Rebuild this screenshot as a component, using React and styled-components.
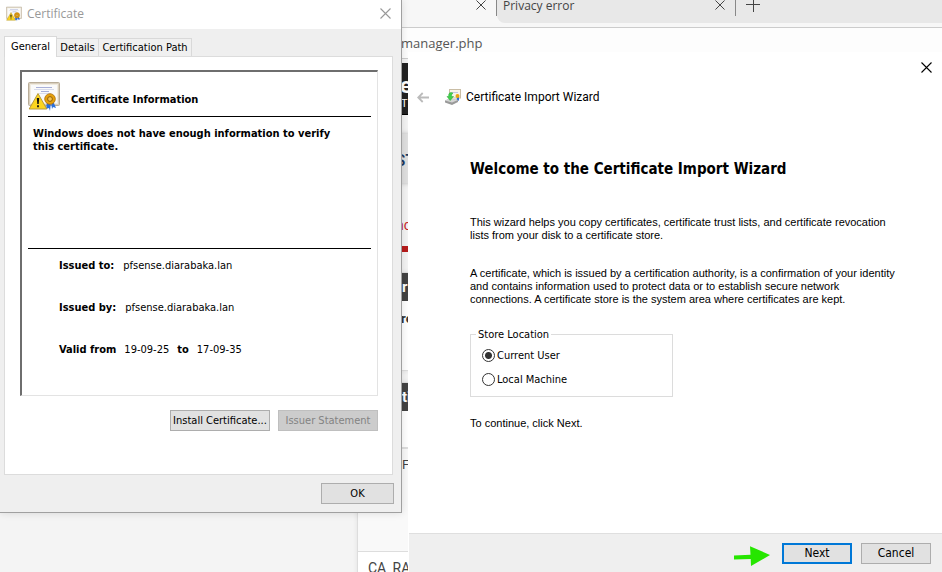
import React from "react";
import styled, { createGlobalStyle } from "styled-components";

const Global = createGlobalStyle`
  *, *::before, *::after { box-sizing: border-box; }
  html, body { margin: 0; padding: 0; }
  body { background: #f4f4f4; color: #000; }
  button, input { font: inherit; margin: 0; }
  h1, h2, p, dl, dd, dt, fieldset { margin: 0; padding: 0; }
`;

const ui = `"DejaVu Sans Condensed", "DejaVu Sans", sans-serif`;
const prose = `"Liberation Sans", Arial, sans-serif`;
const shell = `"Open Sans", "Noto Sans", sans-serif`;
const web = `Roboto, "Noto Sans", sans-serif`;

const Desktop = styled.div`
  position: relative;
  height: 100vh;
  min-height: 520px;
  overflow: hidden;
`;

/* ---------- browser behind the dialogs ---------- */

const Browser = styled.div`
  display: flex;
  flex-direction: column;
  font-family: ${shell};
  color: #444;
  white-space: nowrap;
`;

const TabStrip = styled.div`
  display: flex;
  height: 28px;
  background: #f7f7f7;
  border-bottom: 1px solid #ccc;
`;

const FirstTab = styled.div`
  display: flex;
  justify-content: flex-end;
  width: 497px;
  height: 16px;
  padding-right: 10px;
  border-right: 1px solid #888;
`;

const OtherTabs = styled.div`
  display: flex;
  flex: 1;
  height: 23px;
  background: #e8e8e8;
  border-bottom-left-radius: 8px;
`;

const ErrorTab = styled.div`
  display: flex;
  justify-content: space-between;
  width: 239px;
  height: 16px;
  padding: 0 10px 0 6px;
  border-right: 1px solid #888;
  font-size: 12px;
  line-height: 11px;
`;

const IconButton = styled.button`
  display: flex;
  padding: 0;
  border: 0;
  background: none;
  color: ${(p) => p.$color || "#444"};
`;

const NewTab = styled(IconButton)`
  padding-left: 10px;
`;

const Address = styled.div`
  height: 31px;
  padding-left: 401px;
  background: #fdfdfd;
  border-bottom: 1px solid #ccc;
  font-size: 13px;
  line-height: 31px;
  color: #555;
`;

const Page = styled.div`
  display: flex;
  flex-direction: column;
  padding-top: 4px;
  background: #f4f4f4;
  font-family: ${web};
`;

const Banner = styled.div`
  height: 52px;
  padding: 12px 0 0 400px;
  background: #222;
  color: #fff;
  border-bottom: 1px solid #000;
`;

const BannerTitle = styled.div`
  font-size: 22px;
  font-weight: 700;
  line-height: 22px;
`;

const BannerTag = styled.div`
  padding-left: 1px;
  font-size: 11px;
  line-height: 14px;
`;

const Crumb = styled.div`
  height: 49px;
  margin-top: 19px;
  padding-left: 395px;
  background: #e0e0e0;
  box-shadow: 0 0 5px #bbb;
  color: #1f3a5f;
  font-size: 17px;
  font-weight: 500;
  line-height: 52px;
`;

const Notice = styled.div`
  height: 69px;
  margin-bottom: 20px;
  padding: 32px 0 0 396px;
  border-bottom: 6px solid #b71c1c;
  color: #c62828;
  font-size: 14px;
  line-height: 20px;
`;

const Panel = styled.div`
  height: ${(p) => p.$height};
  margin: 0 0 11px 357px;
  background: #fff;
  border: 1px solid #ddd;
  box-shadow: 0 0 5px rgba(0, 0, 0, 0.08);
`;

const PanelHead = styled.div`
  height: 28px;
  padding-left: 44px;
  background: #424242;
  color: #fff;
  font-size: 15px;
  font-weight: 700;
  line-height: 28px;
`;

const PanelLine = styled.div`
  height: 36px;
  padding-left: ${(p) => (p.$inset ? "37px" : "43px")};
  color: ${(p) => (p.$link ? "#3a7ea6" : "#333")};
  font-size: 13px;
  font-weight: ${(p) => (p.$strong ? 700 : 400)};
  line-height: 36px;
`;

const CaRow = styled.div`
  height: 105px;
  padding-left: 44px;
  background: #f9f9f9;
  border-top: 2px solid #ddd;
  border-bottom: 1px solid #ddd;
  font-size: 13px;
  line-height: 32px;
`;

const CaName = styled.div`
  padding-left: 10px;
  font-size: 14px;
  line-height: 32px;
`;

/* ---------- shared dialog parts ---------- */

const Button = styled.button`
  width: ${(p) => p.$width};
  height: 21px;
  padding: 0;
  border: ${(p) => (p.$primary ? "2px solid #0078d7" : "1px solid #adadad")};
  background: #e1e1e1;
  color: #000;
  font-family: ${ui};
  font-size: ${(p) => (p.$large ? "12px" : "11px")};
  line-height: 15px;
  white-space: nowrap;
  &:disabled {
    border-color: #bfbfbf;
    background: #ccc;
    color: #838383;
  }
`;

/* ---------- certificate dialog ---------- */

const CertWindow = styled.section`
  position: absolute;
  top: 0;
  left: 0;
  width: 402px;
  padding-bottom: 8px;
  background: #efefef;
  border-right: 1px solid #a0a0a0;
  border-bottom: 1px solid #a0a0a0;
  box-shadow: 0 0 8px rgba(0, 0, 0, 0.12);
  font-family: ${ui};
  font-size: 11px;
  line-height: 13px;
`;

const CertTitle = styled.header`
  display: flex;
  align-items: center;
  gap: 5px;
  height: 29px;
  padding: 0 10px 2px 6px;
  background: #fff;
  color: #999;
  font-family: ${shell};
  font-size: 12px;
`;

const Spacer = styled.span`
  flex: 1;
`;

const Tabs = styled.div`
  display: flex;
  align-items: flex-end;
  height: 27px;
  padding: 7px 0 0 4px;
`;

const Tab = styled.button`
  height: ${(p) => (p.$active ? "21px" : "18px")};
  width: ${(p) => p.$width};
  margin-bottom: ${(p) => (p.$active ? "-1px" : "0")};
  padding: ${(p) => (p.$active ? "0 0 2px" : "0")};
  border: 1px solid #d9d9d9;
  border-bottom: 0;
  border-left-width: ${(p) => (p.$joined ? "0" : "1px")};
  background: ${(p) => (p.$active ? "#fff" : "#f0f0f0")};
  color: #000;
  line-height: 17px;
  white-space: nowrap;
`;

const TabPanel = styled.div`
  margin: 0 8px 0 4px;
  padding: 13px 14px 43px 15px;
  background: #fff;
  border: 1px solid #dcdcdc;
`;

const Sunken = styled.div`
  padding: 10px 6px 39px;
  border-style: solid;
  border-width: 2px 1px 1px 2px;
  border-color: #6e6e6e #e3e3e3 #e3e3e3 #6e6e6e;
`;

const InfoHead = styled.div`
  display: flex;
  align-items: center;
  gap: 11px;
  padding-bottom: 5px;
  border-bottom: 1px solid #000;
`;

const InfoTitle = styled.h2`
  padding-top: 5px;
  font-size: 11px;
  font-weight: 700;
`;

const InfoText = styled.p`
  min-height: 132px;
  padding: 10px 24px 0 5px;
  border-bottom: 1px solid #000;
  font-weight: 700;
`;

const Facts = styled.dl`
  display: flex;
  flex-direction: column;
  gap: 29px;
  padding: 10px 0 0 31px;
`;

const Fact = styled.div`
  display: flex;
  gap: ${(p) => p.$gap || "9px"};
  dt { font-weight: 700; }
`;

const PanelButtons = styled.div`
  display: flex;
  justify-content: flex-end;
  gap: 8px;
  padding-top: 14px;
`;

const CertFooter = styled.footer`
  display: flex;
  justify-content: flex-end;
  padding: 8px 7px 0 0;
`;

/* ---------- import wizard ---------- */

const Wizard = styled.section`
  position: absolute;
  top: 52px;
  right: 0;
  bottom: 0;
  left: 408px;
  display: flex;
  flex-direction: column;
  background: #fff;
  font-family: ${ui};
  font-size: 11px;
  line-height: 13px;
`;

const CloseRow = styled.div`
  display: flex;
  justify-content: flex-end;
  padding: 10px 10px 0 0;
`;

const WizardHead = styled.header`
  display: flex;
  align-items: center;
  height: 30px;
  margin-top: 9px;
  padding-left: 9px;
  font-family: ${web};
  font-size: 12px;
  svg + span { margin-left: 5px; }
`;

const BackButton = styled(IconButton)`
  margin-right: 16px;
`;

const WizardBody = styled.div`
  display: flex;
  flex: 1;
  flex-direction: column;
  align-items: flex-start;
  padding: 47px 40px 0 62px;
`;

const Welcome = styled.h1`
  margin-bottom: 37px;
  font-size: 15px;
  font-weight: 700;
  line-height: 20px;
`;

const Para = styled.p`
  margin-bottom: ${(p) => p.$gap || "0"};
  font-family: ${prose};
`;

const StoreBox = styled.fieldset`
  display: flex;
  flex-direction: column;
  gap: 11px;
  width: 203px;
  margin-bottom: 20px;
  padding: 8px 11px 10px;
  border: 1px solid #dcdcdc;
  legend {
    margin-left: -6px;
    padding: 0 2px;
    line-height: 13px;
  }
`;

const Choice = styled.label`
  display: flex;
  align-items: center;
  gap: 2px;
`;

const Radio = styled.input`
  appearance: none;
  width: 13px;
  height: 13px;
  border: 1px solid #333;
  border-radius: 50%;
  background: #fff;
  &:checked { background: radial-gradient(circle, #333 0 3px, #fff 4px); }
`;

const WizardFooter = styled.footer`
  display: flex;
  align-items: center;
  justify-content: flex-end;
  height: 39px;
  margin-left: 1px;
  padding: 0 11px 0 0;
  background: #efefef;
  border-top: 1px solid #dfdfdf;
  button + button { margin-left: 9px; }
  svg { margin: 5px 12px 0 0; }
`;

/* ---------- drawings ---------- */

const Cross = ({ size = 11 }) => (
  <svg width={size} height={size} viewBox="0 0 11 11" fill="none" stroke="currentColor" strokeWidth="1.1" aria-hidden="true">
    <path d="M.5.5l10 10M10.5.5l-10 10" />
  </svg>
);

const Plus = () => (
  <svg width="14" height="12" viewBox="0 0 14 12" fill="none" stroke="currentColor" aria-hidden="true">
    <path d="M0 4.5h14M7.5 0v12" />
  </svg>
);

const Back = () => (
  <svg width="12" height="11" viewBox="0 0 12 11" fill="none" stroke="currentColor" strokeWidth="1.8" aria-hidden="true">
    <path d="M12 5.5H1.5M5.7 1L1.2 5.5 5.7 10" />
  </svg>
);

const CertIcon = ({ width = 32, height = 29 }) => (
  <svg width={width} height={height} viewBox="0 0 32 29" aria-hidden="true">
    <rect x=".5" y=".5" width="31" height="23" rx="1" fill="#d9cfbd" stroke="#b9ad99" />
    <rect x="2.5" y="2.5" width="27" height="19" fill="#fafafa" stroke="#f0ebe0" />
    <path d="M8 5.5h16M13 9.500h8" stroke="#a9b0d8" />
    <path d="M6 7.500h20M11 11.500h12" stroke="#d8dcec" />
    <path d="M19 20l-1 7 3-1 1 3 1-9zM23 20l1 7 1-2 3 1-3-7z" fill="#2a6fdc" />
    <circle cx="22" cy="17" r="5.300" fill="#e5a10c" stroke="#b06f08" strokeWidth=".8" />
    <circle cx="22" cy="17" r="2.400" fill="#f4c350" stroke="#8a5607" strokeWidth=".9" />
    <path d="M10 11.500L1.200 27h17.600z" fill="#fcd51f" stroke="#b79a3c" strokeWidth="1" strokeLinejoin="round" />
    <path d="M8.800 16h2.400l-.5 6H9.300zM9.100 23.300h1.800v1.900H9.100z" fill="#111" />
  </svg>
);

const ImportIcon = () => (
  <svg width="16" height="16" viewBox="0 0 16 16" aria-hidden="true">
    <rect x="4.500" y=".5" width="11" height="8.500" fill="#f6f3ea" stroke="#c9bda5" />
    <path d="M7 3.500h6" stroke="#c3c7e0" />
    <path d="M12 8l-.5 4 1.300-1 1.200 1V8z" fill="#2a6fdc" />
    <circle cx="12.500" cy="7" r="2" fill="#e8a511" />
    <path d="M0 11.500l5-2 8 1.500v2l-6 3-7-2.500z" fill="#9a9a9a" />
    <path d="M0 11.500l5-2 8 1.500-6 2.500z" fill="#d4d4d4" />
    <path d="M6.500 3.500C4 3.500 3.500 5 3.700 7.500H2l3.200 4L8.500 7.500H6.600C6.500 6 6.500 5 8 4.200z" fill="#3fd14a" stroke="#2aa336" strokeWidth=".5" />
  </svg>
);

const Pointer = () => (
  <svg width="36" height="20" viewBox="0 0 36 20" fill="#26e600" aria-hidden="true">
    <path d="M0 9.500l16.500-.8L16 .2 36 9 17 20l-.3-7L0 13.500z" />
  </svg>
);

export default function App() {
  return (
    <Desktop>
      <Global />
      <Browser>
        <TabStrip>
          <FirstTab>
            <IconButton aria-label="Close tab"><Cross size={10} /></IconButton>
          </FirstTab>
          <OtherTabs>
            <ErrorTab>
              <span>Privacy error</span>
              <IconButton aria-label="Close tab"><Cross size={10} /></IconButton>
            </ErrorTab>
            <NewTab aria-label="New tab"><Plus /></NewTab>
          </OtherTabs>
        </TabStrip>
        <Address>manager.php</Address>
        <Page>
          <Banner>
            <BannerTitle>e</BannerTitle>
            <BannerTag>T</BannerTag>
          </Banner>
          <Crumb>ST</Crumb>
          <Notice>nc</Notice>
          <Panel $height="99px">
            <PanelHead>r</PanelHead>
            <PanelLine $strong>re</PanelLine>
          </Panel>
          <Panel $height="auto">
            <PanelHead>ti</PanelHead>
            <PanelLine $link $inset>e</PanelLine>
            <CaRow>F</CaRow>
            <CaName>CA_RA</CaName>
          </Panel>
        </Page>
      </Browser>

      <CertWindow aria-label="Certificate">
        <CertTitle>
          <CertIcon width={16} height={16} />
          <span>Certificate</span>
          <Spacer />
          <IconButton $color="#999" aria-label="Close"><Cross /></IconButton>
        </CertTitle>
        <Tabs role="tablist">
          <Tab role="tab" aria-selected="true" $active $width="53px">General</Tab>
          <Tab role="tab" aria-selected="false" $joined $width="42px">Details</Tab>
          <Tab role="tab" aria-selected="false" $joined $width="93px">Certification Path</Tab>
        </Tabs>
        <TabPanel role="tabpanel">
          <Sunken>
            <InfoHead>
              <CertIcon />
              <InfoTitle>Certificate Information</InfoTitle>
            </InfoHead>
            <InfoText>Windows does not have enough information to verify this certificate.</InfoText>
            <Facts>
              <Fact><dt>Issued to:</dt><dd>pfsense.diarabaka.lan</dd></Fact>
              <Fact><dt>Issued by:</dt><dd>pfsense.diarabaka.lan</dd></Fact>
              <Fact $gap="8px"><dt>Valid from</dt><dd>19-09-25</dd><dt>to</dt><dd>17-09-35</dd></Fact>
            </Facts>
          </Sunken>
          <PanelButtons>
            <Button $width="100px">Install Certificate...</Button>
            <Button $width="100px" disabled>Issuer Statement</Button>
          </PanelButtons>
        </TabPanel>
        <CertFooter>
          <Button $width="73px">OK</Button>
        </CertFooter>
      </CertWindow>

      <Wizard aria-label="Certificate Import Wizard">
        <CloseRow>
          <IconButton $color="#000" aria-label="Close"><Cross /></IconButton>
        </CloseRow>
        <WizardHead>
          <BackButton $color="#bbb" aria-label="Back"><Back /></BackButton>
          <ImportIcon />
          <span>Certificate Import Wizard</span>
        </WizardHead>
        <WizardBody>
          <Welcome>Welcome to the Certificate Import Wizard</Welcome>
          <Para $gap="25px">
            This wizard helps you copy certificates, certificate trust lists, and certificate revocation
            <br />
            lists from your disk to a certificate store.
          </Para>
          <Para $gap="22px">
            A certificate, which is issued by a certification authority, is a confirmation of your identity
            <br />
            and contains information used to protect data or to establish secure network
            <br />
            connections. A certificate store is the system area where certificates are kept.
          </Para>
          <StoreBox>
            <legend>Store Location</legend>
            <Choice><Radio type="radio" name="store" defaultChecked />Current User</Choice>
            <Choice><Radio type="radio" name="store" />Local Machine</Choice>
          </StoreBox>
          <Para>To continue, click Next.</Para>
        </WizardBody>
        <WizardFooter>
          <Pointer />
          <Button $width="70px" $primary $large>Next</Button>
          <Button $width="70px" $large>Cancel</Button>
        </WizardFooter>
      </Wizard>
    </Desktop>
  );
}
